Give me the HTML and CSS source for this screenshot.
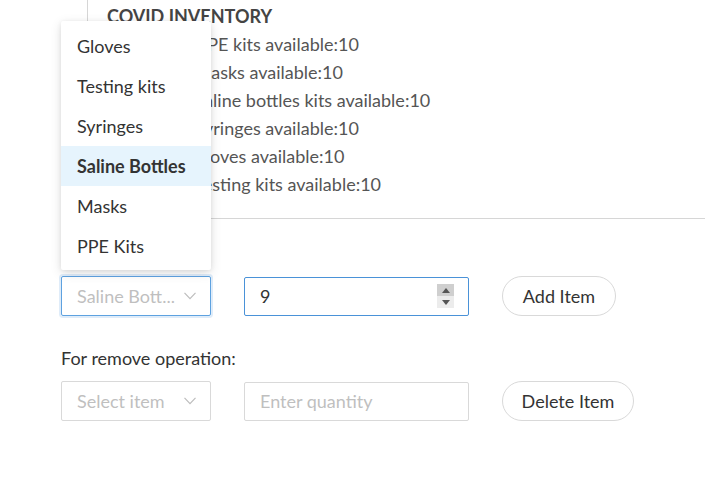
FILE: index.html
```html
<!DOCTYPE html>
<html>
<head>
<meta charset="utf-8">
<link rel="stylesheet" href="styles.css">
</head>
<body>
<div class="card">
  <div class="title">COVID INVENTORY</div>
  <div class="line">Number of PPE kits available:10</div>
  <div class="line">Number of masks available:10</div>
  <div class="line">Number of saline bottles kits available:10</div>
  <div class="line">Number of syringes available:10</div>
  <div class="line">Number of gloves available:10</div>
  <div class="line">Number of testing kits available:10</div>
</div>

<div class="form">
  <div class="row first">
    <div class="select focused">
      <span class="value">Saline Bott...</span>
      <svg class="chev" width="12" height="8" viewBox="0 0 12 8"><path d="M0.5 0.8 L6 6.6 L11.5 0.8" fill="none" stroke="#bdbdbd" stroke-width="1.2"/></svg>
    </div>
    <div class="input focused-input">
      <span class="num">9</span>
      <div class="spin">
        <span class="up"><svg width="8" height="5" viewBox="0 0 8 5"><path d="M0 5 L4 0 L8 5Z" fill="#555"/></svg></span>
        <span class="down"><svg width="8" height="5" viewBox="0 0 8 5"><path d="M0 0 L4 5 L8 0Z" fill="#555"/></svg></span>
      </div>
    </div>
    <button class="btn">Add Item</button>
  </div>
  <div class="label">For remove operation:</div>
  <div class="row">
    <div class="select">
      <span class="value">Select item</span>
      <svg class="chev" width="12" height="8" viewBox="0 0 12 8"><path d="M0.5 0.8 L6 6.6 L11.5 0.8" fill="none" stroke="#bdbdbd" stroke-width="1.2"/></svg>
    </div>
    <div class="input">
      <span class="placeholder">Enter quantity</span>
    </div>
    <button class="btn wide">Delete Item</button>
  </div>
</div>

<div class="menu">
  <div class="opt">Gloves</div>
  <div class="opt">Testing kits</div>
  <div class="opt">Syringes</div>
  <div class="opt active">Saline Bottles</div>
  <div class="opt">Masks</div>
  <div class="opt">PPE Kits</div>
</div>
</body>
</html>
```
FILE: styles.css
```css
* { box-sizing: border-box; }
html, body { margin: 0; padding: 0; background: #fff; }
body {
  font-family: Lato, "Open Sans", sans-serif;
  font-size: 18px;
  color: #333;
  position: relative;
  width: 705px;
  height: 481px;
  overflow: hidden;
}
.card {
  margin-left: 87px;
  width: 640px;
  border-left: 1px solid #d6d6d6;
  border-bottom: 1px solid #d6d6d6;
  padding: 2px 0 20px 19px;
}
.title {
  line-height: 28px;
  font-weight: 700;
  color: #444;
}
.line {
  line-height: 28px;
  color: #555;
}
.form {
  margin-left: 61px;
  padding-top: 57px;
}
.row {
  display: flex;
  align-items: center;
  height: 40px;
}
.select {
  width: 150px;
  height: 40px;
  border: 1px solid #d9d9d9;
  border-radius: 2px;
  display: flex;
  align-items: center;
  justify-content: space-between;
  padding: 0 14px 0 15px;
  color: #bfbfbf;
}
.select.focused {
  border-color: #5ea2e0;
  box-shadow: 0 0 0 2px rgba(94,162,224,0.2);
}
.input {
  margin-left: 33px;
  width: 225px;
  height: 39px;
  border: 1px solid #d9d9d9;
  border-radius: 2px;
  display: flex;
  align-items: center;
  padding: 0 14px 0 15px;
  position: relative;
}
.focused-input { border-color: #4a92d8; }
.num { color: #333; flex: 1; }
.placeholder { color: #bfbfbf; }
.spin {
  width: 17px;
  height: 24px;
  display: flex;
  flex-direction: column;
}
.spin span {
  flex: 1;
  display: flex;
  align-items: center;
  justify-content: center;
}
.spin .up { background: #cfcfcf; }
.spin .down { background: #ececec; }
.btn {
  margin-left: 33px;
  height: 40px;
  width: 114px;
  border: 1px solid #d9d9d9;
  border-radius: 20px;
  background: #fff;
  font-family: inherit;
  font-size: 18px;
  color: #333;
  padding: 0;
}
.btn.wide { width: 132px; }
.label {
  margin-top: 29px;
  line-height: 26px;
  margin-bottom: 10px;
  color: #333;
}
.menu {
  position: absolute;
  left: 61px;
  top: 21px;
  width: 150px;
  background: #fff;
  padding: 5px 0 4px;
  box-shadow: 0 3px 12px rgba(0,0,0,0.12), 0 1px 4px rgba(0,0,0,0.08);
  border-radius: 2px;
}
.opt {
  height: 40px;
  line-height: 40px;
  padding-left: 16px;
  color: #333;
  white-space: nowrap;
}
.opt.active {
  background: #e6f4fd;
  font-weight: 700;
}
```
